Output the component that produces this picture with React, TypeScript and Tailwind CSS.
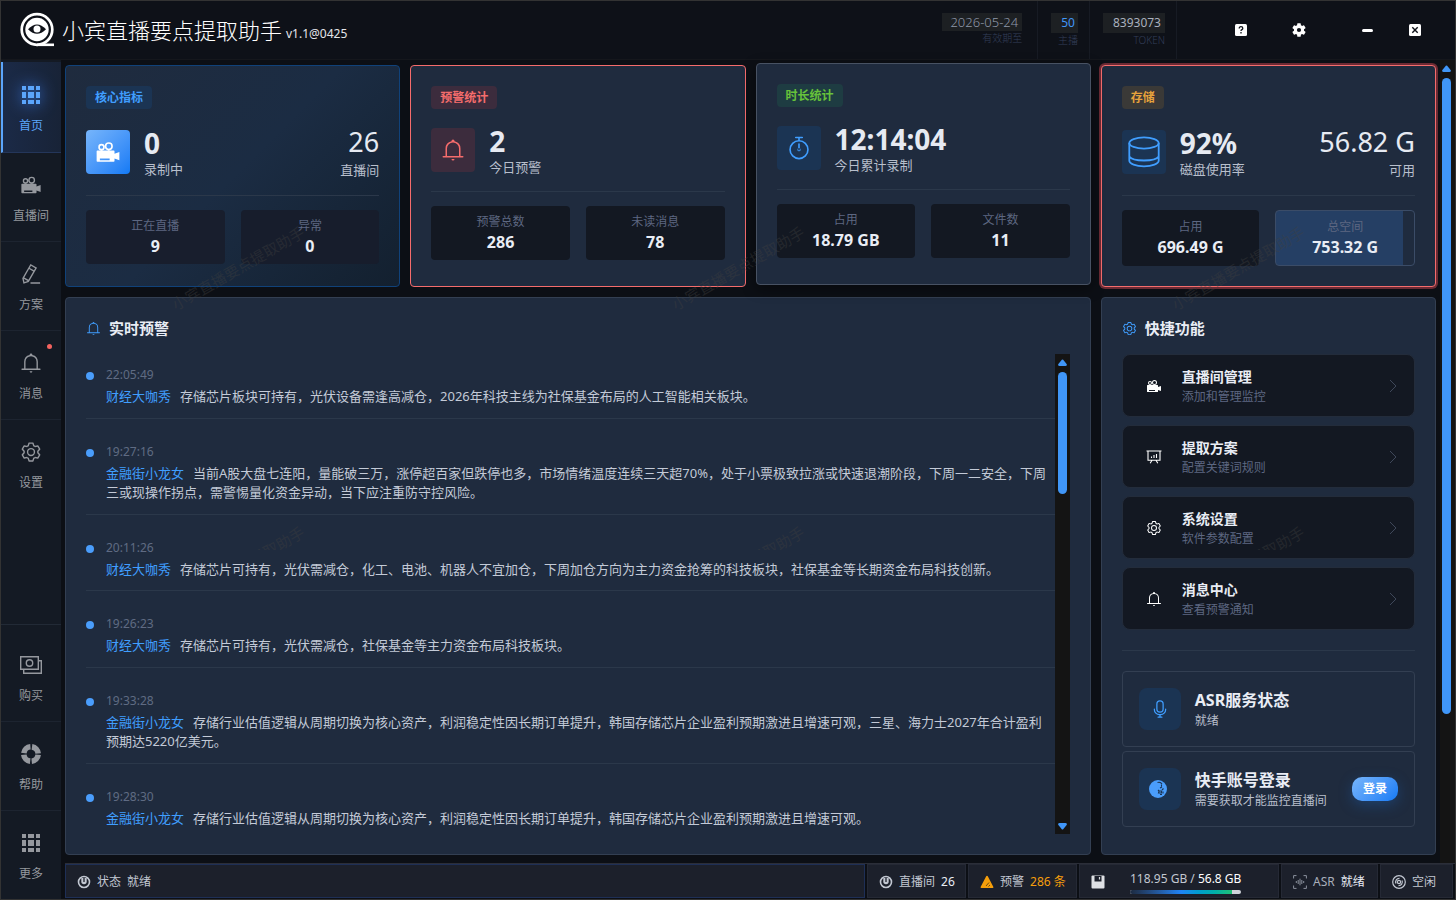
import React from "react";

type IconProps = { className?: string };

const paths = {
  camera:
    "M768 576l192-64v320l-192-64v96a32 32 0 0 1-32 32H96a32 32 0 0 1-32-32V480a32 32 0 0 1 32-32h640a32 32 0 0 1 32 32zM192 768v64h384v-64zm192-480a160 160 0 0 1 320 0 160 160 0 0 1-320 0m64 0a96 96 0 1 0 192.064-.064A96 96 0 0 0 448 288m-320 32a128 128 0 1 1 256.064.064A128 128 0 0 1 128 320m64 0a64 64 0 1 0 128 0 64 64 0 0 0-128 0",
  pen: "m199.04 672.64 193.984 112 224-387.968-193.92-112-224 388.032zm-23.872 60.16 32.896 148.288 144.896-45.696zM455.04 229.248l193.92 112 56.704-98.112-193.984-112zM104.32 708.8l384-665.024 304.768 175.936L409.152 884.8h.064l-248.448 78.336zm384 254.272v-64h448v64z",
  gear: "M600.704 64a32 32 0 0 1 30.464 22.208l35.2 109.376c14.784 7.232 28.928 15.36 42.432 24.512l112.384-24.192a32 32 0 0 1 34.432 15.36L944.32 364.8a32 32 0 0 1-4.032 37.504l-77.12 85.12a357.12 357.12 0 0 1 0 49.024l77.12 85.248a32 32 0 0 1 4.032 37.504l-88.704 153.6a32 32 0 0 1-34.432 15.296L708.8 803.904c-13.44 9.088-27.648 17.28-42.368 24.512l-35.264 109.376A32 32 0 0 1 600.704 960H423.296a32 32 0 0 1-30.464-22.208L357.696 828.48a351.616 351.616 0 0 1-42.56-24.64l-112.32 24.256a32 32 0 0 1-34.432-15.36L79.68 659.2a32 32 0 0 1 4.032-37.504l77.12-85.248a357.12 357.12 0 0 1 0-48.896l-77.12-85.248A32 32 0 0 1 79.68 364.8l88.704-153.6a32 32 0 0 1 34.432-15.296l112.32 24.256c13.568-9.152 27.776-17.408 42.56-24.64l35.2-109.312A32 32 0 0 1 423.232 64H600.64zm-23.424 64H446.72l-36.352 113.088-24.512 11.968a294.113 294.113 0 0 0-34.816 20.096l-22.656 15.36-116.224-25.088-65.28 113.152 79.68 88.192-1.92 27.136a293.12 293.12 0 0 0 0 40.192l1.92 27.136-79.808 88.192 65.344 113.152 116.224-25.024 22.656 15.296a294.113 294.113 0 0 0 34.816 20.096l24.512 11.968L446.72 896h130.688l36.48-113.152 24.448-11.904a288.282 288.282 0 0 0 34.752-20.096l22.592-15.296 116.288 25.024 65.28-113.152-79.744-88.192 1.92-27.136a293.12 293.12 0 0 0 0-40.256l-1.92-27.136 79.808-88.128-65.344-113.152-116.288 24.96-22.592-15.232a287.616 287.616 0 0 0-34.752-20.096l-24.448-11.904L577.344 128zM512 320a192 192 0 1 1 0 384 192 192 0 0 1 0-384m0 64a128 128 0 1 0 0 256 128 128 0 0 0 0-256",
  bell: "M448 128a64 64 0 0 1 128 0v12a320 320 0 0 1 256 308v320h96q32 0 32 32t-32 32H96q-32 0-32-32t32-32h96V448a320 320 0 0 1 256-308zM256 768h512V448a256 256 0 1 0-512 0zm192 128h128a64 64 0 0 1-128 0",
  timer:
    "M512 896a320 320 0 1 0 0-640 320 320 0 0 0 0 640m0 64a384 384 0 1 1 0-768 384 384 0 0 1 0 768M512 320a32 32 0 0 1 32 32l-.512 224a32 32 0 1 1-64 0L480 352a32 32 0 0 1 32-32M448 576a64 64 0 1 0 128 0 64 64 0 1 0-128 0m96-448v128h-64V128h-96a32 32 0 0 1 0-64h256a32 32 0 1 1 0 64z",
  mic: "M512 128a128 128 0 0 0-128 128v256a128 128 0 1 0 256 0V256a128 128 0 0 0-128-128m0-64a192 192 0 0 1 192 192v256a192 192 0 1 1-384 0V256A192 192 0 0 1 512 64m-32 832v-64a288 288 0 0 1-288-288v-32a32 32 0 0 1 64 0v32a224 224 0 0 0 224 224h64a224 224 0 0 0 224-224v-32a32 32 0 1 1 64 0v32a288 288 0 0 1-288 288v64h64a32 32 0 1 1 0 64H416a32 32 0 1 1 0-64z",
};

function Glyph({ name, className }: { name: keyof typeof paths; className?: string }) {
  return (
    <svg viewBox="0 0 1024 1024" fill="currentColor" className={className} aria-hidden="true">
      <path d={paths[name]} />
    </svg>
  );
}

const Camera = (p: IconProps) => <Glyph name="camera" {...p} />;
const Pen = (p: IconProps) => <Glyph name="pen" {...p} />;
const Gear = (p: IconProps) => <Glyph name="gear" {...p} />;
const Bell = (p: IconProps) => <Glyph name="bell" {...p} />;

const GridIcon = ({ className }: IconProps) => (
  <svg viewBox="0 0 22 22" fill="currentColor" className={className} aria-hidden="true">
    <path d="M2 2h4v4H2zM8 2h6v4H8zM16 2h4v4h-4zM2 8h4v6H2zM8 8h6v6H8zM16 8h4v6h-4zM2 16h4v4H2zM8 16h6v4H8zM16 16h4v4h-4z" />
  </svg>
);
const Money = ({ className }: IconProps) => (
  <svg viewBox="0 0 22 22" fill="none" stroke="currentColor" strokeWidth="1.4" className={className} aria-hidden="true">
    <path d="M.7 2.7h17.6v12.6H.7zM18.3 6.7h3v12.6H3.7v-4" />
    <circle cx="9.5" cy="9" r="3.2" />
  </svg>
);
const Ring = ({ className }: IconProps) => (
  <svg viewBox="0 0 22 22" fill="none" stroke="currentColor" strokeWidth="5.6" className={className} aria-hidden="true">
    <circle cx="11" cy="11" r="7.2" strokeDasharray="9.7 1.61" strokeDashoffset="-0.8" />
  </svg>
);
const Disk = ({ className }: IconProps) => (
  <svg viewBox="0 0 44 44" fill="none" stroke="currentColor" strokeWidth="1.8" className={className} aria-hidden="true">
    <ellipse cx="22" cy="13" rx="14.7" ry="5.6" />
    <path d="M7.3 13v17.5c0 3.4 6.6 5.8 14.7 5.8s14.7-2.4 14.7-5.8V13M7.3 26.500c1.5 2.300 7.500 4 14.700 4s13.200-1.700 14.700-4" />
  </svg>
);
const Board = ({ className }: IconProps) => (
  <svg viewBox="0 0 16 16" fill="none" stroke="currentColor" strokeWidth="1.1" className={className} aria-hidden="true">
    <path d="M.5 2h15M2 2v9.300h12V2M6 11.300l-1.800 3M10 11.300l1.800 3M5.500 9V7.500M8 9V6M10.500 9V5" />
  </svg>
);
const Logo = ({ className }: IconProps) => (
  <svg viewBox="0 0 36 36" fill="none" className={className} aria-hidden="true">
    <circle cx="18" cy="17.500" r="15.300" stroke="#fff" strokeWidth="2.700" />
    <path d="M18 32.800h17" stroke="#fff" strokeWidth="2.600" />
    <circle cx="18" cy="17.500" r="11.700" fill="#fff" />
    <path d="M9 17.300q9-9.500 18 0q-9 9-18 0z" fill="#0f1118" />
    <circle cx="18" cy="17" r="3.500" fill="#fff" />
  </svg>
);
const Power = ({ className }: IconProps) => (
  <svg viewBox="0 0 14 14" fill="none" stroke="currentColor" className={className} aria-hidden="true">
    <circle cx="7" cy="7" r="5.500" strokeWidth="1.600" />
    <path d="M4.300 3v3.500a2.700 2.700 0 0 0 5.400 0V3z" fill="currentColor" stroke="none" />
    <path d="M7 3v4" stroke="#1c202b" strokeWidth="1.300" />
  </svg>
);

const nav = [
  { label: "直播间", icon: Camera },
  { label: "方案", icon: Pen },
  { label: "消息", icon: Bell, dot: true },
  { label: "设置", icon: Gear },
];
const navBottom = [
  { label: "购买", icon: Money },
  { label: "帮助", icon: Ring },
  { label: "更多", icon: GridIcon },
];

function NavItem({ label, icon: Icon, dot, last }: { label: string; icon: React.FC<IconProps>; dot?: boolean; last?: boolean }) {
  return (
    <button
      className={`relative flex w-full flex-col items-center pt-[21px] text-[#95989e] ${last ? "h-[88px]" : "h-[89px] border-b border-[#1d2430]"}`}
    >
      <Icon className="size-[22px]" />
      <span className="mt-[11px] text-xs leading-[18px]">{label}</span>
      {dot && <span className="absolute top-[13px] right-[9px] size-[5px] rounded-full bg-[#f5635f]" />}
    </button>
  );
}

function Card({ tag, tagClass, className, children }: { tag: string; tagClass: string; className: string; children: React.ReactNode }) {
  return (
    <section className={`flex flex-col rounded border p-5 ${className}`}>
      <h2 className={`h-[23px] self-start rounded px-[9px] text-xs leading-[23px] font-bold ${tagClass}`}>{tag}</h2>
      {children}
    </section>
  );
}

function Metric({ icon, value, label, side, sideLabel }: { icon: React.ReactNode; value: string; label: string; side?: string; sideLabel?: string }) {
  return (
    <div className={`mt-3 flex items-center border-b border-[#2b384a] pb-3 ${side ? "h-[75px]" : "h-[71px]"}`}>
      {icon}
      <div className="ml-[14px] flex-1">
        <div className="text-[28px] leading-[34px] font-bold text-[#e6eaf2]">{value}</div>
        <div className="text-[13px] leading-[18px] text-[#b8bfcc]">{label}</div>
      </div>
      {side && (
        <div className="text-right">
          <div className="text-[27px] leading-9 text-[#e6eaf2]">{side}</div>
          <div className="text-[13px] leading-5 text-[#b8bfcc]">{sideLabel}</div>
        </div>
      )}
    </div>
  );
}

function Stat({ label, value, className = "bg-[#131822]" }: { label: string; value: string; className?: string }) {
  return (
    <div className={`flex flex-1 flex-col items-center justify-center rounded text-center ${className}`}>
      <span className="text-xs leading-[18px] text-[#5d6781]">{label}</span>
      <span className="text-base leading-[22px] font-bold text-[#e9edf5]">{value}</span>
    </div>
  );
}

const alerts = [
  { time: "22:05:49", who: "财经大咖秀", text: "存储芯片板块可持有，光伏设备需逢高减仓，2026年科技主线为社保基金布局的人工智能相关板块。" },
  { time: "19:27:16", who: "金融街小龙女", text: "当前A股大盘七连阳，量能破三万，涨停超百家但跌停也多，市场情绪温度连续三天超70%，处于小票极致拉涨或快速退潮阶段，下周一二安全，下周三或现操作拐点，需警惕量化资金异动，当下应注重防守控风险。" },
  { time: "20:11:26", who: "财经大咖秀", text: "存储芯片可持有，光伏需减仓，化工、电池、机器人不宜加仓，下周加仓方向为主力资金抢筹的科技板块，社保基金等长期资金布局科技创新。" },
  { time: "19:26:23", who: "财经大咖秀", text: "存储芯片可持有，光伏需减仓，社保基金等主力资金布局科技板块。" },
  { time: "19:33:28", who: "金融街小龙女", text: "存储行业估值逻辑从周期切换为核心资产，利润稳定性因长期订单提升，韩国存储芯片企业盈利预期激进且增速可观，三星、海力士2027年合计盈利预期达5220亿美元。" },
  { time: "19:28:30", who: "金融街小龙女", text: "存储行业估值逻辑从周期切换为核心资产，利润稳定性因长期订单提升，韩国存储芯片企业盈利预期激进且增速可观。" },
];

const shortcuts = [
  { title: "直播间管理", sub: "添加和管理监控", icon: Camera },
  { title: "提取方案", sub: "配置关键词规则", icon: Board },
  { title: "系统设置", sub: "软件参数配置", icon: Gear },
  { title: "消息中心", sub: "查看预警通知", icon: Bell },
];

const Arrow = ({ down }: { down?: boolean }) => (
  <svg viewBox="0 0 9 7" className={`h-[7px] w-[9px] shrink-0 ${down ? "rotate-180" : ""}`} fill="#4096f7" aria-hidden="true">
    <path d="M3.800.8q.7-.8 1.400 0L8.800 5.200q.3 1.800-1.300 1.800h-6Q-.1 7 .2 5.200z" />
  </svg>
);

function Watermark() {
  return (
    <div className="pointer-events-none absolute inset-x-0 top-0 h-[549px] overflow-hidden text-[15px] leading-5 text-[#404040]/40 select-none" aria-hidden="true">
      {[257, 557].map((y) =>
        [162, 662, 1162].map((x) => (
          <span key={`${x}-${y}`} className="absolute w-[150px] -rotate-30 whitespace-nowrap" style={{ left: x, top: y }}>
            小宾直播要点提取助手
          </span>
        ))
      )}
    </div>
  );
}

export default function App() {
  return (
    <div className="relative flex h-screen min-h-[900px] flex-col overflow-hidden border border-[#333] bg-[#0c0f15] font-['Noto_Sans','Noto_Sans_CJK_SC',sans-serif] text-[#d6dbe5]">
      <header className="flex h-[59px] shrink-0 items-stretch border-b border-[#15171c] bg-[#0e1118]">
        <div className="flex flex-1 items-center pl-[18px]">
          <Logo className="size-9" />
          <h1 className="ml-[7px] text-[22px] leading-8 font-light text-white">小宾直播要点提取助手</h1>
          <span className="mt-2 ml-1 text-xs leading-4 text-[#e4e6ea]">v1.1@0425</span>
        </div>
        <dl className="flex text-right">
          <div className="flex flex-col-reverse items-end justify-end border-r border-[#171b24] pt-3 pr-[15px]">
            <dt className="text-[10px] leading-[14px] font-light text-[#333e58]">有效期至</dt>
            <dd className="bg-[#1d2023] pr-1 pl-2 text-[13px] leading-[18px] font-light text-[#8f98a9]">2026-05-24</dd>
          </div>
          <div className="flex flex-col-reverse items-end justify-end border-r border-[#171b24] pt-3 pr-[11px] pl-[13px]">
            <dt className="text-[10px] leading-[14px] font-light text-[#333e58]">主播</dt>
            <dd className="bg-[#1d2023] pr-[3px] pl-[10px] text-xs leading-5 text-[#4096f7]">50</dd>
          </div>
          <div className="flex flex-col-reverse items-end justify-end border-r border-[#171b24] pt-3 pr-[11px] pl-[13px]">
            <dt className="text-[10px] leading-[14px] font-light text-[#333e58]">TOKEN</dt>
            <dd className="bg-[#1d2023] pr-1 pl-[10px] text-xs leading-5 text-[#a9b0be]">8393073</dd>
          </div>
        </dl>
        <div className="flex items-center pl-[54px] text-white">
          <button aria-label="帮助" className="grid size-5 place-items-center">
            <svg viewBox="0 0 12 12" className="size-3"><rect width="12" height="12" rx="1.500" fill="#fff" /><path d="M4.200 4.500q0-1.800 1.800-1.800t1.800 1.500q0 .9-.9 1.400T6 7M6 8v1.400" fill="none" stroke="#0e1118" strokeWidth="1.300" /></svg>
          </button>
          <button aria-label="设置" className="ml-[38px] grid size-5 place-items-center">
            <svg viewBox="2 2 20 20" className="size-[14px]" fill="#fff"><path d="M19.140 12.940c.04-.3.06-.61.06-.94s-.02-.64-.07-.94l2.030-1.580a.49.49 0 0 0 .12-.61l-1.920-3.320a.49.49 0 0 0-.59-.22l-2.390.96a7 7 0 0 0-1.620-.94l-.36-2.540a.48.48 0 0 0-.48-.41h-3.840a.48.48 0 0 0-.47.41l-.36 2.540a7.400 7.400 0 0 0-1.620.94l-2.390-.96a.48.48 0 0 0-.59.22L2.740 8.870a.48.48 0 0 0 .12.61l2.030 1.580a6 6 0 0 0-.02 1.880l-2.030 1.580a.49.49 0 0 0-.12.61l1.920 3.320c.12.22.37.29.59.22l2.390-.96c.5.38 1.030.7 1.620.94l.36 2.540c.05.24.24.41.48.41h3.840c.24 0 .44-.17.47-.41l.36-2.540a7.400 7.400 0 0 0 1.620-.94l2.390.96c.22.080.47 0 .59-.22l1.920-3.320a.48.48 0 0 0-.12-.61zM12 15a3 3 0 1 1 0-6 3 3 0 0 1 0 6z" /></svg>
          </button>
          <button aria-label="最小化" className="ml-12 grid size-5 place-items-center">
            <span className="h-[3px] w-[11px] rounded-sm bg-white" />
          </button>
          <button aria-label="关闭" className="mr-[30px] ml-7 grid size-5 place-items-center">
            <svg viewBox="0 0 12 12" className="size-3"><rect width="12" height="12" rx="1.500" fill="#fff" /><path d="m3.300 3.300 5.400 5.400m0-5.400-5.400 5.400" stroke="#0e1118" strokeWidth="1.400" /></svg>
          </button>
        </div>
      </header>

      <div className="flex min-h-0 flex-1">
        <nav className="flex w-[60px] shrink-0 flex-col bg-[#141a24] pt-[2px]">
          <button className="flex h-[91px] w-full shrink-0 flex-col items-center border-b border-l-2 border-b-[#24365a] border-l-[#5ba5fb] bg-linear-to-r from-[#1b2a47] to-[#182337] pt-[22px] pr-[2px] text-[#5ba5fb]">
            <GridIcon className="size-[22px] drop-shadow-[0_0_8px_#3b82f6]" />
            <span className="mt-[11px] text-xs leading-[18px]">首页</span>
          </button>
          {nav.map((n) => (
            <NavItem key={n.label} {...n} last={n.label === "设置"} />
          ))}
          <div className="mt-auto border-t border-[#222a36] pt-2">
            {navBottom.map((n) => (
              <NavItem key={n.label} {...n} last={n.label === "更多"} />
            ))}
          </div>
        </nav>

        <div className="flex min-w-0 flex-1 flex-col">
          <div className="flex min-h-0 flex-1">
            <main className="grid min-w-0 flex-1 grid-cols-4 grid-rows-[auto_1fr] gap-[10px] pt-[5px] pr-1 pb-2 pl-1">
              <Card tag="核心指标" tagClass="bg-[#1b3453] text-[#409eff]" className="border-[#10427a] bg-linear-135 from-[#1f2b3e] via-[#1b2c43] to-[#13202f]">
                <Metric
                  icon={<span className="grid size-11 place-items-center rounded bg-linear-135 from-[#76b5fb] to-[#0f7af5] text-white"><Camera className="size-[26px]" /></span>}
                  value="0" label="录制中" side="26" sideLabel="直播间"
                />
                <div className="mt-[14px] flex h-[54px] gap-4">
                  <Stat label="正在直播" value="9" className="bg-[#181e2d]" />
                  <Stat label="异常" value="0" className="bg-[#171d2c]" />
                </div>
              </Card>
              <Card tag="预警统计" tagClass="bg-[#3c2c3d] text-[#f56c6c]" className="border-[#f56c6c] bg-[#1f2b3e]">
                <Metric
                  icon={<span className="grid size-11 place-items-center rounded bg-[#3c2c3d] text-[#f56c6c]"><Bell className="size-6" /></span>}
                  value="2" label="今日预警"
                />
                <div className="mt-[14px] flex h-[54px] gap-4">
                  <Stat label="预警总数" value="286" />
                  <Stat label="未读消息" value="78" />
                </div>
              </Card>
              <Card tag="时长统计" tagClass="bg-[#1e3c42] text-[#67c23a]" className="-translate-y-0.5 border-[#485263] bg-[#1f2b3e] shadow-[0_4px_14px_#00000066]">
                <Metric
                  icon={<span className="grid size-11 place-items-center rounded bg-[#1b3453] text-[#409eff]"><Glyph name="timer" className="size-[26px]" /></span>}
                  value="12:14:04" label="今日累计录制"
                />
                <div className="mt-[14px] flex h-[54px] gap-4">
                  <Stat label="占用" value="18.79 GB" />
                  <Stat label="文件数" value="11" />
                </div>
              </Card>
              <Card tag="存储" tagClass="bg-[#3a3937] text-[#e6a23c]" className="border-[#f56c6c] bg-[#1f2b3e] shadow-[0_0_0_2px_#6b2a34]">
                <Metric
                  icon={<span className="grid size-11 place-items-center rounded bg-[#1b3453] text-[#409eff]"><Disk className="size-11" /></span>}
                  value="92%" label="磁盘使用率" side="56.82 G" sideLabel="可用"
                />
                <div className="mt-[14px] flex h-14 gap-4">
                  <Stat label="占用" value="696.49 G" />
                  <Stat label="总空间" value="753.32 G" className="border border-[#3b4c67] bg-linear-to-r from-[#253f64] from-92% to-[#1f2b3e] to-92%" />
                </div>
              </Card>

              <section className="col-span-3 flex min-h-0 flex-col rounded border border-[#333f52] bg-[#1f2b3e] p-5">
                <h2 className="flex h-5 items-center gap-2 text-[15px] font-bold text-[#e9edf5]">
                  <Bell className="size-[15px] text-[#409eff]" />
                  实时预警
                </h2>
                <div className="mt-4 flex min-h-0 flex-1">
                  <ul className="flex min-w-0 flex-1 flex-col gap-3 overflow-hidden">
                    {alerts.map((a, i) => (
                      <li key={a.time} className={`flex shrink-0 pt-3 pb-[11px] ${i < alerts.length - 1 ? "border-b border-[#2b384a]" : ""}`}>
                        <span className="mt-[6px] size-2 shrink-0 rounded-full bg-[#4a9dfb]" />
                        <div className="pr-1 pl-3">
                          <time className="block text-xs leading-[18px] text-[#5f6b83]">{a.time}</time>
                          <p className="mt-[3px] text-[13px] leading-normal text-[#c3cad7]">
                            <a href="#" className="mr-[9px] text-[#409eff]">{a.who}</a>
                            {a.text}
                          </p>
                        </div>
                      </li>
                    ))}
                  </ul>
                  <div className="flex w-[15px] shrink-0 flex-col items-center bg-[#141414] pt-[5px] pb-1" aria-hidden="true">
                    <Arrow />
                    <div className="mt-[6px] flex w-[9px] flex-1">
                      <div className="h-[27%] w-full rounded-full bg-[#4096f7]" />
                    </div>
                    <Arrow down />
                  </div>
                </div>
              </section>

              <section className="flex flex-col rounded border border-[#333f52] bg-[#1f2b3e] p-5">
                <h2 className="flex h-5 items-center gap-2 text-[15px] font-bold text-[#e9edf5]">
                  <Gear className="size-[15px] text-[#409eff]" />
                  快捷功能
                </h2>
                <div className="mt-4 flex flex-col gap-2">
                  {shortcuts.map(({ title, sub, icon: Icon }) => (
                    <button key={title} className="flex h-[63px] items-center rounded-lg border border-[#232c3b] bg-[#131822] pr-[17px] pl-[23px] text-left">
                      <Icon className="size-4 text-white" />
                      <span className="ml-5 flex-1">
                        <span className="block text-sm leading-[22px] font-bold text-[#e9edf5]">{title}</span>
                        <span className="block text-xs leading-[18px] text-[#5d6781]">{sub}</span>
                      </span>
                      <svg viewBox="0 0 8 14" className="h-[14px] w-2" fill="none" stroke="#3e4759" aria-hidden="true"><path d="m1 1 6 6-6 6" /></svg>
                    </button>
                  ))}
                </div>
                <div className="mt-5 border-t border-[#2b384a] pt-5">
                  <div className="flex h-[76px] items-center rounded border border-[#333f52] px-4">
                    <span className="grid size-[42px] place-items-center rounded-lg bg-[#1b3453] text-[#409eff]"><Glyph name="mic" className="size-5" /></span>
                    <div className="ml-[14px]">
                      <h3 className="text-base leading-6 font-bold text-[#e9edf5]">ASR服务状态</h3>
                      <p className="text-xs leading-[18px] text-[#b8bfcc]">就绪</p>
                    </div>
                  </div>
                  <div className="mt-1 flex h-[76px] items-center rounded border border-[#333f52] px-4">
                    <span className="grid size-[42px] place-items-center rounded-lg bg-[#1b3453]">
                      <svg viewBox="0 0 20 20" className="mr-1 size-5" aria-hidden="true">
                        <circle cx="10" cy="10" r="9" fill="#4a9dfb" />
                        <path d="M9.500 3.500q3-1 4.500 1.500M13.500 5.500v2M12 9l2-1M10 11l1 1M10.500 14h3v-2h-2.500zM14 11l1.500-1.500M15 12.500v2M12 15.500h2" fill="none" stroke="#1b3453" strokeWidth="1.100" />
                      </svg>
                    </span>
                    <div className="ml-[14px] flex-1">
                      <h3 className="text-base leading-6 font-bold text-[#e9edf5]">快手账号登录</h3>
                      <p className="text-xs leading-[18px] text-[#b8bfcc]">需要获取才能监控直播间</p>
                    </div>
                    <button className="h-6 w-[46px] rounded-[10px] bg-linear-135 from-[#76b5fb] to-[#0f7af5] text-xs leading-6 font-bold text-white shadow-[0_4px_14px_#1b5fb266]">登录</button>
                  </div>
                </div>
              </section>
            </main>
            <div className="flex w-[15px] shrink-0 flex-col items-center gap-[6px] bg-[#141414] pt-[5px] pr-[2px]" aria-hidden="true">
              <Arrow />
              <div className="flex w-[9px] flex-1">
                <div className="h-[81%] w-full rounded-full bg-[#4096f7]" />
              </div>
            </div>
          </div>

          <footer className="ml-1 flex h-9 shrink-0 gap-[2px] border-t border-[#2b2e38] pb-px text-xs text-[#c3c8d2] *:flex *:items-center *:border *:bg-[#1c202b] *:pt-[2px]">
            <div className="flex-1 gap-[6px] border-[#1e2f56] pl-[11px]">
              <Power className="size-[14px]" />
              <span>状态</span>
              <span>就绪</span>
            </div>
            <div className="w-[99px] gap-[6px] border-[#252935] pl-[11px]">
              <Power className="size-[14px]" />
              <span>直播间</span>
              <span className="text-[#e9edf5]">26</span>
            </div>
            <div className="w-[109px] gap-[6px] border-[#252935] pl-[11px]">
              <svg viewBox="0 0 14 14" className="size-[14px]" aria-hidden="true"><path d="M7 .8q.5 0 .8.5l5.600 10.600q.3 1.100-.8 1.100H1.400q-1.100 0-.8-1.100L6.200 1.300q.3-.5.8-.5z" fill="#f59e0b" /><path d="m6 11 3-3.500M8.500 11.500l1.500-1.500" stroke="#6b4a12" /></svg>
              <span>预警</span>
              <span className="text-[#f59e0b]">286 条</span>
            </div>
            <div className="w-[200px] border-[#252935] pl-[11px]">
              <svg viewBox="0 0 14 14" className="size-[14px]" aria-hidden="true"><rect x=".5" y=".5" width="13" height="13" rx="1" fill="#dfe1e5" /><path d="M3.500 1h7v5.500h-7z" fill="#1c202b" /><path d="M8.500 2v2.500" stroke="#dfe1e5" strokeWidth="1.200" /></svg>
              <div className="ml-[25px]">
                <div className="leading-4">118.95 GB / <span className="text-white">56.8 GB</span></div>
                <div role="progressbar" aria-label="磁盘" aria-valuenow={92} className="mt-[3px] h-1 overflow-hidden rounded-full bg-[#cfd3da]">
                  <div className="h-full w-[92%] bg-linear-to-r from-[#1c2a40] via-[#1f83f5] to-[#1fbf75]" />
                </div>
              </div>
            </div>
            <div className="w-[97px] gap-[6px] border-[#252935] pl-[11px]">
              <svg viewBox="0 0 14 14" className="size-[14px]" fill="none" stroke="#8b919d" aria-hidden="true"><path d="M.6 3.500V.6h2.900M10.500.6h2.900v2.900M13.400 10.500v2.900h-2.900M3.500 13.400H.6v-2.900M3.300 6v2M5.200 5v4M7 3.700v6.600M8.800 5v4M10.700 6v2" /></svg>
              <span className="text-[#a9afbb]">ASR</span>
              <span className="text-[#e9edf5]">就绪</span>
            </div>
            <div className="mr-[2px] w-[73px] gap-[6px] border-[#252935] pl-[11px]">
              <svg viewBox="0 0 14 14" className="size-[14px]" fill="none" stroke="currentColor" strokeWidth="1.200" aria-hidden="true"><circle cx="7" cy="7" r="6.300" /><circle cx="7" cy="7" r="1.600" /><path d="M4 8.500A3.600 3.600 0 0 1 7.500 3.400M10 5.500a3.600 3.600 0 0 1-3.500 5.100" /></svg>
              <span>空闲</span>
            </div>
          </footer>
        </div>
      </div>
      <Watermark />
    </div>
  );
}
